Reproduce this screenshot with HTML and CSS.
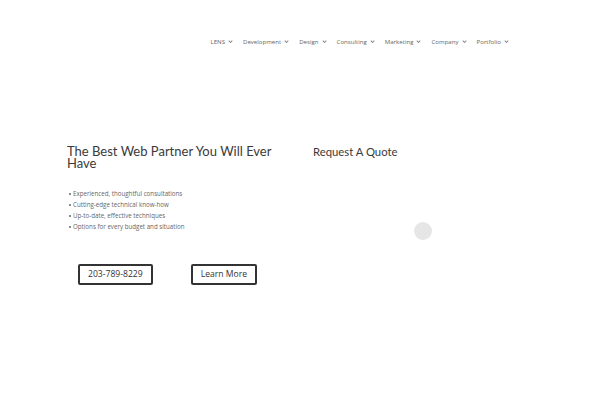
FILE: index.html
```html
<!DOCTYPE html>
<html lang="en">
<head>
    <meta charset="UTF-8">
    <meta name="viewport" content="width=device-width, initial-scale=1.0">
    <title>The Best Web Partner</title>
    <link rel="stylesheet" href="styles.css">
</head>
<body>
    <header class="header">
        <nav class="nav">
            <a href="#">LENS</a>
            <a href="#">Development</a>
            <a href="#">Design</a>
            <a href="#">Consulting</a>
            <a href="#">Marketing</a>
            <a href="#">Company</a>
            <a href="#">Portfolio</a>
        </nav>
    </header>

    <section class="hero">
        <div class="column">
            <h1>The Best Web Partner You Will Ever Have</h1>
            <ul class="points">
                <li>Experienced, thoughtful consultations</li>
                <li>Cutting-edge technical know-how</li>
                <li>Up-to-date, effective techniques</li>
                <li>Options for every budget and situation</li>
            </ul>
            <div class="buttons">
                <a class="button" href="#">203-789-8229</a>
                <a class="button" href="#">Learn More</a>
            </div>
        </div>
        <div class="column">
            <h2>Request A Quote</h2>
            <div class="loader"></div>
        </div>
    </section>
</body>
</html>
```

FILE: styles.css
```css
* {
    margin: 0;
    padding: 0;
    box-sizing: border-box;
}

body {
    font-family: 'Open Sans', Arial, sans-serif;
    background: #fff;
    color: #666;
}

.header {
    width: 466px;
    margin: 0 auto;
    padding-top: 37px;
    padding-right: 25px;
    display: flex;
    justify-content: flex-end;
}

.nav {
    display: flex;
    gap: 11px;
}

.nav a {
    font-size: 6.1px;
    line-height: 10px;
    color: #666;
    text-decoration: none;
}

.nav a::after {
    content: "";
    display: inline-block;
    width: 2px;
    height: 2px;
    margin-left: 4px;
    border-right: 0.8px solid #888;
    border-bottom: 0.8px solid #888;
    transform: translateY(-1.5px) rotate(45deg);
}

.hero {
    width: 466px;
    margin: 98px auto 0;
    display: flex;
    gap: 26px;
}

.column {
    width: 220px;
}

h1, h2 {
    font-family: Lato, 'Open Sans', sans-serif;
    font-weight: 400;
    color: #3a3a3a;
}

h1 {
    font-size: 13px;
    line-height: 12px;
}

h2 {
    font-size: 11.3px;
    line-height: 14px;
}

.points {
    margin-top: 19px;
    padding-left: 6px;
    list-style: none;
}

.points li {
    position: relative;
    font-size: 6.2px;
    line-height: 11px;
    color: #666;
}

.points li::before {
    content: "";
    position: absolute;
    left: -4px;
    top: 5px;
    width: 2px;
    height: 2px;
    background: #666;
    border-radius: 50%;
}

.buttons {
    display: flex;
    gap: 38px;
    margin-top: 32px;
    padding-left: 11px;
}

.button {
    display: inline-block;
    border: 2px solid #333;
    border-radius: 2px;
    padding: 3px 8px;
    font-size: 8.6px;
    line-height: 11px;
    color: #333;
    text-decoration: none;
}

.loader {
    width: 18px;
    height: 18px;
    margin: 63px auto 0;
    background: #e6e6e6;
    border-radius: 50%;
}
```
